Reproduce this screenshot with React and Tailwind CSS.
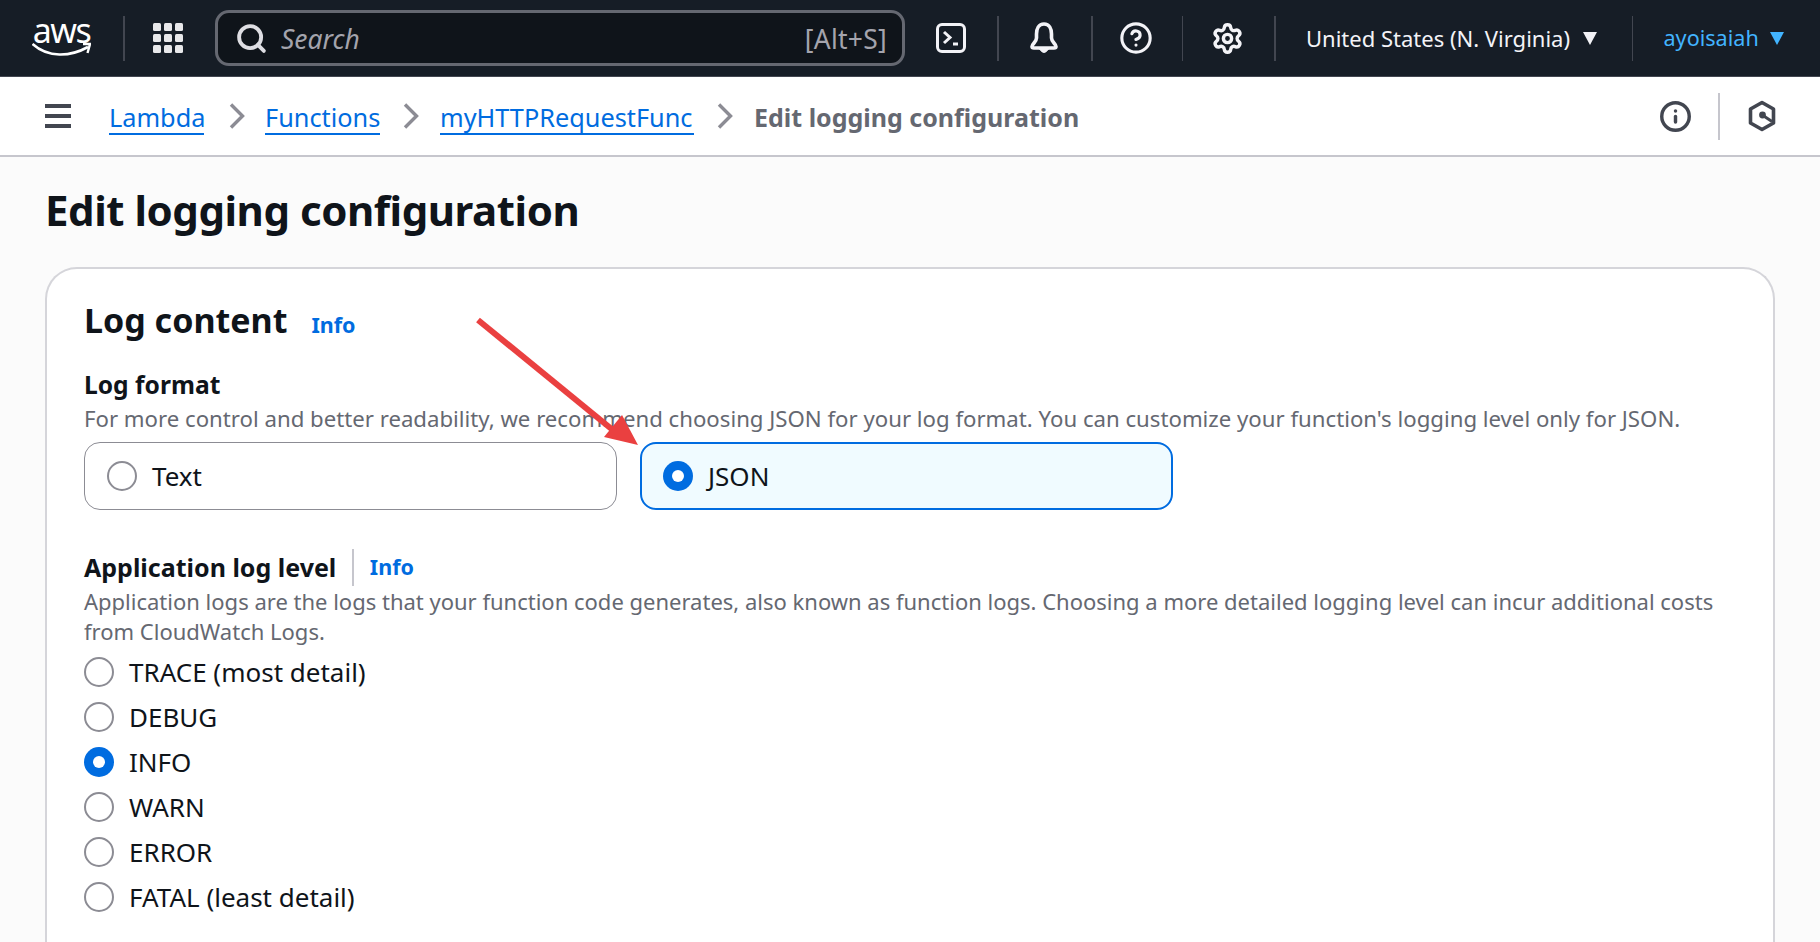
import { Search, Settings, CircleHelp, Info } from 'lucide-react'

const font = { fontFamily: '"Noto Sans", sans-serif' }

const levels = [
  { label: 'TRACE (most detail)' },
  { label: 'DEBUG' },
  { label: 'INFO', checked: true },
  { label: 'WARN' },
  { label: 'ERROR' },
  { label: 'FATAL (least detail)' }
]

function Radio({ checked }) {
  if (checked) {
    return (
      <span className="w-[30px] h-[30px] rounded-full bg-[#006ce0] flex items-center justify-center shrink-0">
        <span className="w-[12px] h-[12px] rounded-full bg-white" />
      </span>
    )
  }
  return <span className="w-[30px] h-[30px] rounded-full border-2 border-[#8c8c94] bg-white shrink-0" />
}

function Chevron() {
  return (
    <svg width="16" height="26" viewBox="0 0 16 26" fill="none" stroke="#8c8c94" strokeWidth="3.4" className="shrink-0">
      <path d="M2 1.5 L13.5 13 L2 24.5" />
    </svg>
  )
}

function NavDivider({ className }) {
  return <span className={`w-[1.5px] h-[45px] bg-[#424650] shrink-0 ${className}`} />
}

function Crumb({ children, className }) {
  return <a className={`text-[25.3px] text-[#006ce0] border-b-2 border-[#006ce0] mt-[3px] leading-[32px] h-[34px] whitespace-nowrap shrink-0 ${className}`}>{children}</a>
}

function TopNav() {
  return (
    <header className="h-[77px] bg-[#161d26] border-b border-[#424650] flex items-center shrink-0">
      <div className="ml-[32px] w-[59px] h-[40px] flex flex-col items-center shrink-0 relative">
        <span className="text-white text-[34px] leading-[24px] font-normal tracking-[-1.5px]">aws</span>
        <svg width="59" height="18" viewBox="0 0 59 18" fill="none" className="absolute left-0 top-[22px]">
          <path d="M0.5 4 C16 18 38 17 56 7" stroke="#fff" strokeWidth="2.6" />
          <path d="M51 4 L58 4 L55.5 13" stroke="#fff" strokeWidth="2.4" />
        </svg>
      </div>
      <NavDivider className="ml-[32px]" />
      <div className="ml-[28.5px] w-[30px] grid grid-cols-3 gap-[3px] shrink-0">
        {[0, 1, 2, 3, 4, 5, 6, 7, 8].map(i => <span key={i} className="h-[8px] rounded-[1.5px] bg-[#e8e8ea]" />)}
      </div>
      <div className="ml-[32px] w-[690px] h-[56px] rounded-[14px] border-[3px] border-[#656871] bg-[#0f141a] flex items-center shrink-0">
        <Search size={33} strokeWidth={2.8} className="ml-[17px] text-[#dedee3] shrink-0" />
        <span className="ml-[13px] mt-[3px] italic text-[26.4px] text-[#a4a4ad]">Search</span>
        <span className="ml-auto mr-[15px] mt-[3px] text-[26.4px] tracking-[0.3px] text-[#a4a4ad]">[Alt+S]</span>
      </div>
      <div className="ml-[31px] w-[30px] h-[30px] rounded-[6px] border-[3px] border-[#f3f3f7] flex items-center shrink-0">
        <svg width="24" height="24" viewBox="0 0 24 24" fill="none" stroke="#f3f3f7" strokeWidth="3">
          <path d="M5 6 L11 11.5 L5 17" />
          <path d="M14 18 H19" />
        </svg>
      </div>
      <NavDivider className="ml-[31px]" />
      <svg width="30" height="33" viewBox="0 0 30 33" fill="none" stroke="#f3f3f7" className="ml-[30.5px] shrink-0">
        <path d="M15 2 C9.5 2 7.5 7 7.5 12 V16 C7.5 20 3 22 3 24.5 C3 25.5 4 26 5 26 H25 C26 26 27 25.5 27 24.5 C27 22 22.5 20 22.5 16 V12 C22.5 7 20.5 2 15 2 Z" strokeWidth="3.6" strokeLinejoin="round" />
        <path d="M10.5 27 Q15 34 19.5 27 Z" fill="#f3f3f7" strokeWidth="1" />
      </svg>
      <NavDivider className="ml-[32px]" />
      <CircleHelp size={34} strokeWidth={2.2} className="ml-[26.5px] text-[#f3f3f7] shrink-0" />
      <NavDivider className="ml-[28.5px]" />
      <Settings size={33} strokeWidth={2.5} className="ml-[27.5px] text-[#f3f3f7] shrink-0" />
      <NavDivider className="ml-[30.5px]" />
      <span className="ml-[30.5px] text-[22px] text-[#f3f3f7] whitespace-nowrap w-[266px] shrink-0">United States (N. Virginia)</span>
      <span className="ml-[11px] w-0 h-0 border-x-[7.5px] border-x-transparent border-t-[13px] border-t-[#f3f3f7] shrink-0" />
      <NavDivider className="ml-[34.5px]" />
      <span className="ml-[30.5px] text-[21.6px] text-[#42b4ff] w-[94px] shrink-0">ayoisaiah</span>
      <span className="ml-[12.5px] w-0 h-0 border-x-[7.5px] border-x-transparent border-t-[13px] border-t-[#42b4ff] shrink-0" />
    </header>
  )
}

function Breadcrumbs() {
  return (
    <div className="h-[80px] bg-white border-b-2 border-[#c6c6cd] flex items-center shrink-0">
      <div className="ml-[45px] w-[26px] flex flex-col gap-[6px] shrink-0">
        <span className="h-[4px] bg-[#424650]" />
        <span className="h-[4px] bg-[#424650]" />
        <span className="h-[4px] bg-[#424650]" />
      </div>
      <Crumb className="ml-[38px] w-[95px]">Lambda</Crumb>
      <span className="ml-[25px]"><Chevron /></span>
      <Crumb className="ml-[20px] w-[115px]">Functions</Crumb>
      <span className="ml-[23px]"><Chevron /></span>
      <Crumb className="ml-[21px] w-[254px]">myHTTPRequestFunc</Crumb>
      <span className="ml-[23px]"><Chevron /></span>
      <span className="ml-[21px] mt-[2px] text-[25px] leading-[32px] font-bold text-[#656871] whitespace-nowrap w-[323px] shrink-0">Edit logging configuration</span>
      <Info size={33} strokeWidth={2.5} className="ml-auto text-[#424650] shrink-0" />
      <span className="ml-[26.5px] w-[1.5px] h-[47px] bg-[#c6c6cd] shrink-0" />
      <svg width="30" height="32" viewBox="0 0 30 32" fill="none" stroke="#424650" strokeWidth="3.6" className="ml-[27.5px] mr-[43px] shrink-0">
        <path d="M15 2.5 L26.5 9 V23 L15 29.5 L3.5 23 V9 Z" strokeLinejoin="round" />
        <circle cx="15.5" cy="15" r="3.4" fill="#424650" stroke="none" />
        <path d="M16 15.5 L25 21.5" strokeWidth="3" />
      </svg>
    </div>
  )
}

function LogArrow() {
  return (
    <svg width="180" height="140" viewBox="0 0 180 140" className="absolute left-[470px] top-[315px]">
      <path d="M8 5 L144 116" stroke="#ea4040" strokeWidth="6" />
      <path d="M168 130 L134 122 L152 100 Z" fill="#ea4040" />
    </svg>
  )
}

export default function App() {
  return (
    <div className="relative h-[942px] overflow-hidden flex flex-col bg-[#fbfbfb] text-[#0f141a]" style={font}>
      <TopNav />
      <Breadcrumbs />
      <h1 className="ml-[45px] mt-[23px] mb-[1px] h-[60px] leading-[60px] text-[42px] font-bold tracking-[-0.46px]">Edit logging configuration</h1>
      <main className="ml-[45px] mr-[45px] mt-[26px] flex-1 rounded-t-[32px] border-x-2 border-t-2 border-[#d5d5da] bg-white pl-[37px] pt-[26px]">
        <div className="flex items-baseline h-[50px]">
          <h2 className="text-[34px] font-bold leading-[50px]">Log content</h2>
          <a className="ml-[24px] text-[21.5px] font-bold text-[#006ce0]">Info</a>
        </div>
        <div className="mt-[23px] text-[24.6px] font-bold leading-[34px]">Log format</div>
        <p className="mt-[1px] text-[22.2px] text-[#656871] leading-[32px] whitespace-nowrap">For more control and better readability, we recommend choosing JSON for your log format. You can customize your function's logging level only for JSON.</p>
        <div className="mt-[7px] flex gap-[23px]">
          <div className="w-[533px] h-[68px] rounded-[16px] border-[1.5px] border-[#8c8c94] bg-white flex items-center pl-[22px]">
            <Radio />
            <span className="ml-[15px] text-[26px]">Text</span>
          </div>
          <div className="w-[533px] h-[68px] rounded-[16px] border-[2.5px] border-[#006ce0] bg-[#f0fbff] flex items-center pl-[21px]">
            <Radio checked />
            <span className="ml-[15px] text-[26px]">JSON</span>
          </div>
        </div>
        <div className="mt-[39px] flex items-center h-[37px]">
          <span className="text-[25px] font-bold whitespace-nowrap">Application log level</span>
          <span className="ml-[16px] w-[1.5px] h-[37px] bg-[#c6c6cd]" />
          <a className="ml-[16px] text-[21.5px] font-bold text-[#006ce0]">Info</a>
        </div>
        <p className="w-[1660px] text-[22px] text-[#656871] leading-[30px]">Application logs are the logs that your function code generates, also known as function logs. Choosing a more detailed logging level can incur additional costs from CloudWatch Logs.</p>
        <div className="mt-[11px] flex flex-col gap-[15px]">
          {levels.map(l => (
            <div key={l.label} className="flex items-center h-[30px]">
              <Radio checked={l.checked} />
              <span className="ml-[15px] text-[26px] whitespace-nowrap">{l.label}</span>
            </div>
          ))}
        </div>
      </main>
      <LogArrow />
    </div>
  )
}
